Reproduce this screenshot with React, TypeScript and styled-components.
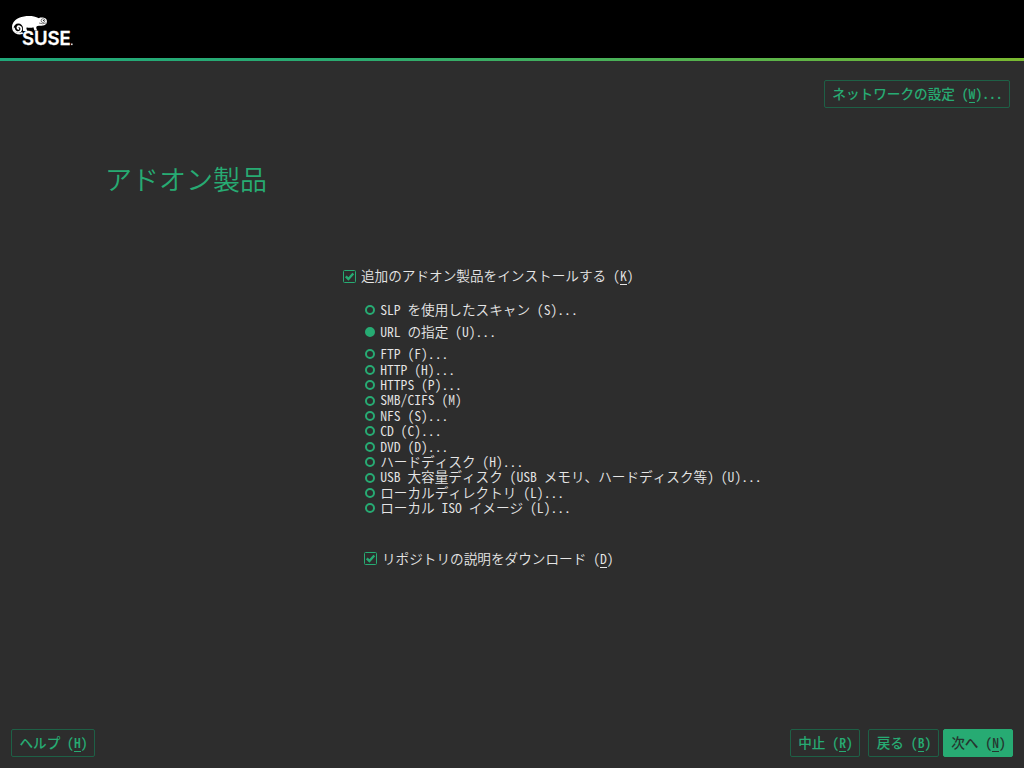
import React from 'react';
import styled, { createGlobalStyle, css } from 'styled-components';

const green = '#27ab73';

const GlobalStyle = createGlobalStyle`
  * { box-sizing: border-box; }
  body {
    margin: 0;
    background: #2d2d2d;
    color: #e6e6e6;
    font: 350 13.64px/15px "Noto Sans CJK JP", sans-serif;
    font-feature-settings: "hwid" 1;
    font-kerning: none;
  }
`;

const Screen = styled.div`
  width: 1024px;
  height: 768px;
  display: flex;
  flex-direction: column;
  overflow: hidden;
  background: #2d2d2d;
`;

const Banner = styled.header`
  height: 58px;
  flex: none;
  padding: 13px 0 0 10px;
  background: #000;
`;

const Stripe = styled.div`
  height: 3px;
  flex: none;
  background: linear-gradient(90deg, #20a87a 0%, #2bab70 35%, #7ab930 100%);
`;

const Toolbar = styled.div`
  display: flex;
  justify-content: flex-end;
  padding: 19px 14px 0 0;
`;

const Button = styled.button<{ $width: number; $primary?: boolean }>`
  width: ${(p) => p.$width}px;
  height: 28px;
  padding: 0 0 1px 1px;
  border: 1px solid #1e6046;
  border-radius: 2px;
  background: transparent;
  color: ${green};
  font: inherit;
  font-weight: 500;
  font-feature-settings: inherit;
  font-kerning: none;
  white-space: pre;
  ${(p) =>
    p.$primary &&
    css`
      background: ${green};
      border-color: ${green};
      color: #25362f;
    `}
`;

const Key = styled.span`
  display: inline-block;
  height: 17px;
  margin-bottom: -2px;
  border-bottom: 1px solid currentColor;
  vertical-align: top;
`;

const Title = styled.h1`
  margin: 51px 0 0 105px;
  height: 40px;
  color: ${green};
  font-size: 27px;
  line-height: 40px;
  font-weight: 350;
`;

const Form = styled.main`
  flex: 1;
  padding: 69px 0 0 343px;
`;

const Sources = styled.div`
  margin: 18px 0 0 21px;
`;

const Choice = styled.label<{ $height?: number; $indent?: number; $top?: number }>`
  display: flex;
  align-items: center;
  gap: 5px;
  height: ${(p) => p.$height ?? 15.4}px;
  margin: ${(p) => p.$top ?? 0}px 0 0 ${(p) => p.$indent ?? 0}px;
  white-space: pre;
`;

const Caption = styled.span`
  height: 15px;
  margin-bottom: 1px;
`;

const Radio = styled.span<{ $on?: boolean }>`
  width: 10px;
  height: 10px;
  margin: 0.4px 0.5px 0 0.7px;
  border: 2px solid ${green};
  border-radius: 50%;
  background: ${(p) => (p.$on ? green : 'transparent')};
`;

const Footer = styled.footer`
  display: flex;
  padding: 0 11px 11px;
`;

const Actions = styled.div`
  display: flex;
  margin-left: auto;
`;

const Spacer = styled.span<{ $size: number }>`
  width: ${(p) => p.$size}px;
`;

const Wordmark = styled.text`
  font: 600 18.5px Inter, sans-serif;
  fill: #fff;
  stroke: #fff;
  stroke-width: 0.3;
`;

const Logo = () => (
  <svg width="66" height="42" viewBox="0 0 66 42">
    <path
      fill="#fff"
      d="M2.2 14C2.2 8 7 4.6 14 3.4C19 2.6 24 2.8 29 5.2L30 4.6C32 4.2 34.5 4.6 36 5.8C37 7 37.2 9 36.5 10.6C35 12.4 33 13 30 12.7C26.5 12.4 26 13.5 26.4 15.4L27.2 17.6H24.4L23.4 14.2C21 15.4 18 14.6 16.6 14.4C16 15.6 17 16.8 17.4 18H13.2L12.6 16Z"
    />
    <path
      fill="none"
      stroke="#fff"
      strokeWidth="1.9"
      strokeLinecap="round"
      d="M12 20.2C7.5 21.5 3 18.6 3 14.2C3 10.4 6 8.6 8.6 9"
    />
    <circle cx="8.3" cy="15.2" r="4.7" fill="#000" />
    <path
      fill="none"
      stroke="#fff"
      strokeWidth="1.8"
      strokeLinecap="round"
      d="M4 15.5C4.4 18.8 8 20 10.3 18.3C12 16.8 11.5 13.9 9.5 13.3C7.6 12.9 6.6 15.1 8.4 15.8"
    />
    <path fill="none" stroke="#000" strokeWidth=".5" d="M29 10Q32.5 11.6 36.3 9.9" />
    <circle cx="33" cy="7.6" r="1.9" fill="#fff" stroke="#000" strokeWidth=".5" />
    <circle cx="33.5" cy="7.5" r=".6" fill="#000" />
    <Wordmark x="12" y="32" textLength="48.8" lengthAdjust="spacingAndGlyphs">SUSE</Wordmark>
    <rect x="61" y="30.5" width="1.6" height="1.6" fill="#ddd" />
  </svg>
);

const Check = () => (
  <svg width="13" height="13" viewBox="0 0 13 13">
    <rect x=".5" y=".5" width="12" height="12" rx="1" fill="none" stroke={green} />
    <path d="M2.8 6.3L5.4 9L10.3 3.5" fill="none" stroke={green} strokeWidth="2.4" />
  </svg>
);

const sources = [
  'HTTP (H)...',
  'HTTPS (P)...',
  'SMB/CIFS (M)',
  'NFS (S)...',
  'CD (C)...',
  'DVD (D)...',
  'ハードディスク (H)...',
  'USB 大容量ディスク (USB メモリ、ハードディスク等) (U)...',
  'ローカルディレクトリ (L)...',
  'ローカル ISO イメージ (L)...',
];

export default function App() {
  return (
    <Screen lang="ja">
      <GlobalStyle />
      <Banner>
        <Logo />
      </Banner>
      <Stripe />
      <Toolbar>
        <Button $width={186}>ネットワークの設定 (<Key>W</Key>)...</Button>
      </Toolbar>
      <Title>アドオン製品</Title>
      <Form>
        <Choice $height={16}>
          <Check />
          <Caption>追加のアドオン製品をインストールする (<Key>K</Key>)</Caption>
        </Choice>
        <Sources>
          <Choice $height={16}>
            <Radio />
            <Caption>SLP を使用したスキャン (S)...</Caption>
          </Choice>
          <Choice $height={16} $top={6}>
            <Radio $on />
            <Caption>URL の指定 (U)...</Caption>
          </Choice>
          <Choice $height={16} $top={6}>
            <Radio />
            <Caption>FTP (F)...</Caption>
          </Choice>
          {sources.map((s) => (
            <Choice key={s}>
              <Radio />
              <Caption>{s}</Caption>
            </Choice>
          ))}
        </Sources>
        <Choice $height={16} $indent={21} $top={35}>
          <Check />
          <Caption>リポジトリの説明をダウンロード (<Key>D</Key>)</Caption>
        </Choice>
      </Form>
      <Footer>
        <Button $width={84}>ヘルプ (<Key>H</Key>)</Button>
        <Actions>
          <Button $width={70}>中止 (<Key>R</Key>)</Button>
          <Spacer $size={8} />
          <Button $width={71}>戻る (<Key>B</Key>)</Button>
          <Spacer $size={4} />
          <Button $width={70} $primary>次へ (<Key>N</Key>)</Button>
        </Actions>
      </Footer>
    </Screen>
  );
}
